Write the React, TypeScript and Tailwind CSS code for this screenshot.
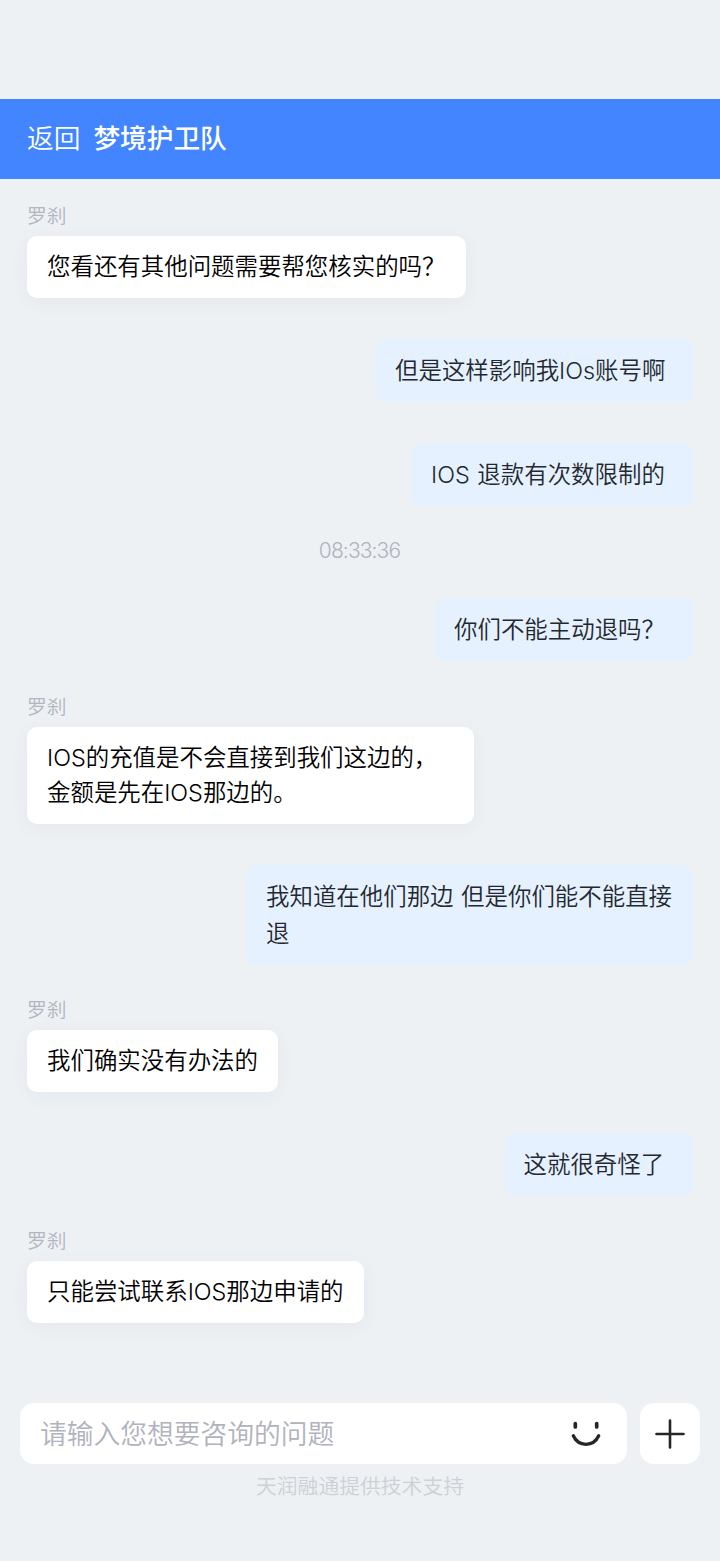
type Message = {
  from: "agent" | "user" | "time";
  lines: string[];
  className: string;
};

const AGENT_NAME = "罗刹";

const messages: Message[] = [
  { from: "agent", lines: ["您看还有其他问题需要帮您核实的吗？"], className: "w-[438.5px]" },
  { from: "user", lines: ["但是这样影响我IOs账号啊"], className: "mt-[41px] w-[317px] pl-[19px]" },
  { from: "user", lines: ["IOS 退款有次数限制的"], className: "mt-[41px] w-[281px] pl-[19px]" },
  { from: "time", lines: ["08:33:36"], className: "mt-[31px]" },
  { from: "user", lines: ["你们不能主动退吗？"], className: "mt-[33px] w-[258px] pl-[19px]" },
  {
    from: "agent",
    lines: ["IOS的充值是不会直接到我们这边的，", "金额是先在IOS那边的。"],
    className: "mt-8 w-[447px]",
  },
  {
    from: "user",
    lines: ["我知道在他们那边 但是你们能不能直接", "退"],
    className: "mt-[41px] w-[447px] pl-5",
  },
  { from: "agent", lines: ["我们确实没有办法的"], className: "mt-[31px] w-[251px]" },
  { from: "user", lines: ["这就很奇怪了"], className: "mt-[41px] w-[188.5px] pl-[19px]" },
  { from: "agent", lines: ["只能尝试联系IOS那边申请的"], className: "mt-[31px] w-[336.5px]" },
];

function MessageRow({ message }: { message: Message }) {
  const { from, lines, className } = message;

  if (from === "time") {
    return (
      <div className={`h-7 self-center pr-px text-[21px] leading-7 tracking-[-0.9px] text-[#b0b2c0] ${className}`}>
        {lines[0]}
      </div>
    );
  }

  if (from === "user") {
    return (
      <div
        className={`self-end rounded-[10px] bg-[#e5f1ff] py-[13px] text-[23.45px] leading-[37px] [word-spacing:1px] whitespace-nowrap text-[#24282e] ${className}`}
      >
        {lines.map((line) => (
          <p key={line}>{line}</p>
        ))}
      </div>
    );
  }

  return (
    <div className={`self-start ${className}`}>
      <div className="mb-[6px] h-7 text-[19.8px] leading-7 text-[#b3b5c0]">{AGENT_NAME}</div>
      <div className="rounded-[10px] bg-white pt-[13px] pb-[14px] pl-5 text-[23.45px] leading-[35px] whitespace-nowrap text-black shadow-[0_4px_20px_rgba(40,50,60,0.045)]">
        {lines.map((line) => (
          <p key={line}>{line}</p>
        ))}
      </div>
    </div>
  );
}

function SmileIcon() {
  return (
    <svg width="30" height="28" viewBox="0 0 30 28" fill="none" stroke="#262626" strokeLinecap="round">
      <path d="M4.300 3.500v3.400M25.700 3.500v3.400" strokeWidth="3.700" />
      <path d="M2.300 15.800C5 21.600 9.600 24.300 15 24.300S25 21.600 27.700 15.800" strokeWidth="3.300" />
    </svg>
  );
}

function PlusIcon() {
  return (
    <svg width="30" height="30" viewBox="0 0 30 30" fill="none" stroke="#262626" strokeWidth="2.6" strokeLinecap="round">
      <path d="M15 1.500v27M1.500 15h27" />
    </svg>
  );
}

export default function App() {
  return (
    <div className="flex h-[1561px] w-[720px] flex-col bg-[#edf1f4] pt-[99px] font-['Inter','Noto_Sans_CJK_SC',sans-serif] font-[350]">
      <header className="flex h-20 shrink-0 items-center bg-[#4285ff] pb-[2px] pl-[27px] text-[26.7px] leading-10 text-white">
        <span>返回</span>
        <h1 className="ml-[13px] font-medium">梦境护卫队</h1>
      </header>

      <main className="flex flex-1 flex-col px-[27px] pt-[23px]">
        {messages.map((message, index) => (
          <MessageRow key={index} message={message} />
        ))}
      </main>

      <footer className="h-[158px] shrink-0 px-5">
        <div className="flex gap-[13px]">
          <div className="flex h-[61px] w-[607px] items-center justify-between rounded-[14px] bg-white pr-[26px] pl-5">
            <span className="text-[26.75px] leading-10 text-[#b0b2bd]">请输入您想要咨询的问题</span>
            <SmileIcon />
          </div>
          <button className="flex h-[61px] w-[60px] items-center justify-center rounded-[14px] bg-white">
            <PlusIcon />
          </button>
        </div>
        <p className="mt-[9px] text-center text-[20.8px] leading-7 text-[#cdd0d7]">天润融通提供技术支持</p>
      </footer>
    </div>
  );
}
